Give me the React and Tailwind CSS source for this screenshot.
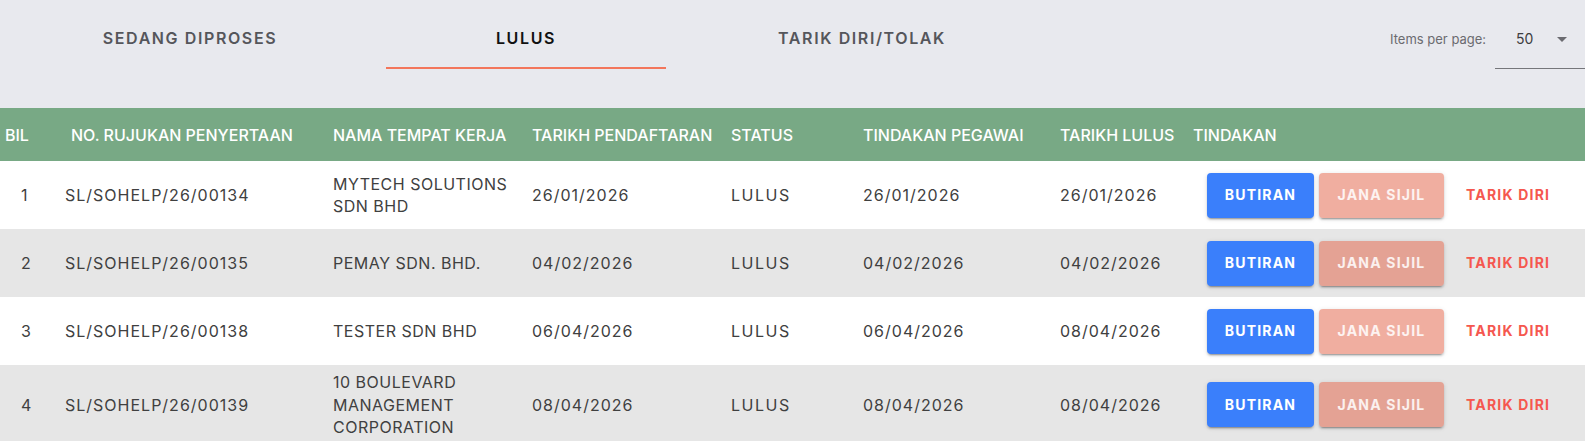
import React from 'react';

const TABS = [
  { label: 'SEDANG DIPROSES', active: false },
  { label: 'LULUS', active: true },
  { label: 'TARIK DIRI/TOLAK', active: false },
];

const COLUMNS = [
  { label: 'BIL', className: 'pl-[5px]' },
  { label: 'NO. RUJUKAN PENYERTAAN', className: 'pl-[6px]' },
  { label: 'NAMA TEMPAT KERJA', className: '' },
  { label: 'TARIKH PENDAFTARAN', className: '' },
  { label: 'STATUS', className: '' },
  { label: 'TINDAKAN PEGAWAI', className: '' },
  { label: 'TARIKH LULUS', className: '' },
  { label: 'TINDAKAN', className: '' },
];

const ROWS = [
  { bil: 1, ref: 'SL/SOHELP/26/00134', nama: ['MYTECH SOLUTIONS', 'SDN BHD'], daftar: '26/01/2026', pegawai: '26/01/2026', lulus: '26/01/2026' },
  { bil: 2, ref: 'SL/SOHELP/26/00135', nama: ['PEMAY SDN. BHD.'], daftar: '04/02/2026', pegawai: '04/02/2026', lulus: '04/02/2026' },
  { bil: 3, ref: 'SL/SOHELP/26/00138', nama: ['TESTER SDN BHD'], daftar: '06/04/2026', pegawai: '06/04/2026', lulus: '08/04/2026' },
  { bil: 4, ref: 'SL/SOHELP/26/00139', nama: ['10 BOULEVARD', 'MANAGEMENT', 'CORPORATION'], daftar: '08/04/2026', pegawai: '08/04/2026', lulus: '08/04/2026' },
];

const GRID = 'grid grid-cols-[65px_268px_199px_199px_132px_197px_133px_1fr]';
const RAISED = 'shadow-[0_3px_1px_-2px_rgba(0,0,0,0.2),0_2px_2px_0_rgba(0,0,0,0.14),0_1px_5px_0_rgba(0,0,0,0.12)]';

export default function App() {
  return (
    <div className="w-[1585px] min-h-screen overflow-hidden bg-white font-['Inter',sans-serif]">
      {/* Tabs + paginator */}
      <div className="flex h-[108px] bg-[#e8e9ee]">
        <div className="flex gap-[56px] pl-[50px]">
          {TABS.map((tab) => (
            <div
              key={tab.label}
              className={`w-[280px] h-[69px] pt-[28px] text-center text-[16px] leading-[20px] font-semibold tracking-[1.6px] border-b-2 ${
                tab.active ? 'text-[#111] border-[#f3765b]' : 'text-[#55565b] border-transparent'
              }`}
            >
              {tab.label}
            </div>
          ))}
        </div>

        <div className="ml-auto w-[197px] shrink-0 flex items-start pt-[29px] text-[13px] text-[#6b6b70]">
          <span className="w-[107px] shrink-0 pl-[2px] leading-[20px]">Items per page:</span>
          <div className="w-[110px] shrink-0 h-[40px] border-b border-[#75767a] flex items-start">
            <span className="pl-[21px] text-[14px] leading-[20px] text-[#3d3d40]">50</span>
            <span className="ml-[24px] mt-[8px] w-0 h-0 border-l-[5px] border-r-[5px] border-t-[5px] border-l-transparent border-r-transparent border-t-[#6b6b70]" />
          </div>
        </div>
      </div>

      {/* Table header */}
      <div className={`${GRID} h-[53px] items-center bg-[#78a985] text-white text-[16px] font-medium`}>
        {COLUMNS.map((col) => (
          <div key={col.label} className={`whitespace-nowrap ${col.className}`}>
            {col.label}
          </div>
        ))}
      </div>

      {/* Table body */}
      {ROWS.map((row, i) => (
        <div
          key={row.bil}
          className={`${GRID} min-h-[68px] py-[6px] items-center text-[16px] leading-[22.5px] tracking-[1px] text-[#404040] ${
            i % 2 === 1 ? 'bg-[#e6e6e6]' : 'bg-white'
          }`}
        >
          <div className="pl-[21px]">{row.bil}</div>
          <div>{row.ref}</div>
          <div className="tracking-[0.5px]">
            {row.nama.map((line) => (
              <div key={line}>{line}</div>
            ))}
          </div>
          <div>{row.daftar}</div>
          <div className="tracking-[1.5px]">LULUS</div>
          <div>{row.pegawai}</div>
          <div>{row.lulus}</div>
          <div className="flex items-center pl-[14px] tracking-[1.2px]">
            <button className={`h-[45px] w-[107px] rounded-[4px] bg-[#3a7ffb] text-white text-[14px] font-bold ${RAISED}`}>
              BUTIRAN
            </button>
            <button className={`ml-[5px] h-[45px] w-[125px] rounded-[4px] bg-[rgba(226,99,72,0.52)] text-white/85 text-[14px] font-bold ${RAISED}`}>
              JANA SIJIL
            </button>
            <button className="ml-[22px] h-[45px] text-[14px] font-bold text-[#f5574f]">
              TARIK DIRI
            </button>
          </div>
        </div>
      ))}
    </div>
  );
}
